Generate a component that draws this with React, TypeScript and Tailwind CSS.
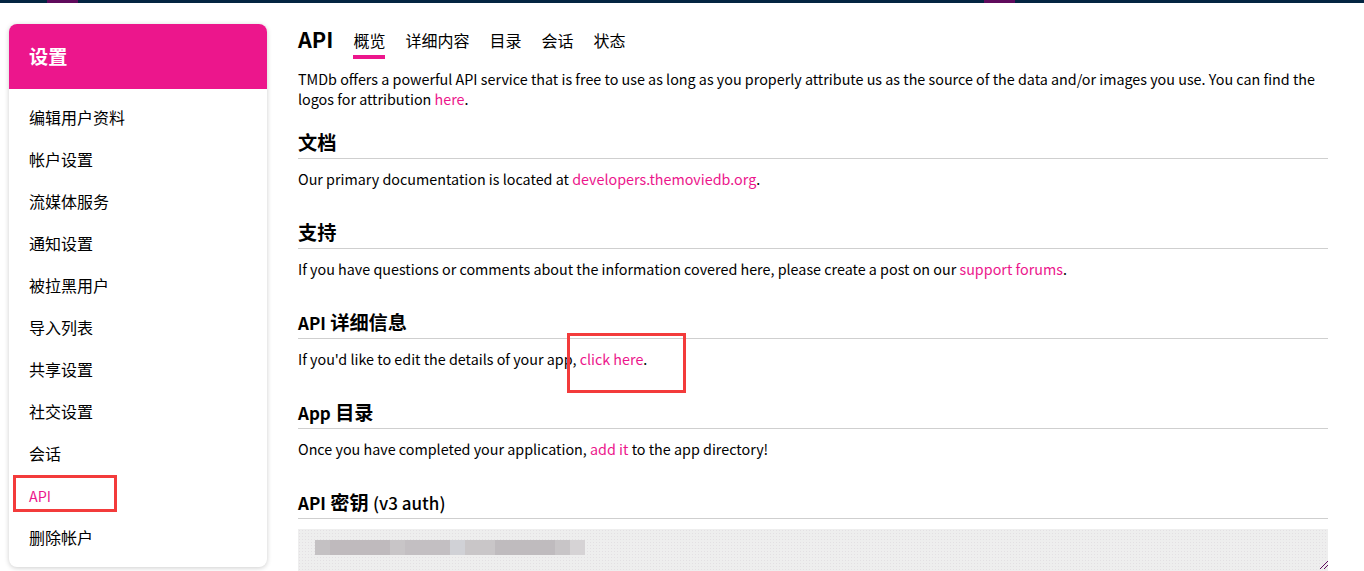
const PINK = 'text-[#ec168c]';

const menu = ['编辑用户资料', '帐户设置', '流媒体服务', '通知设置', '被拉黑用户', '导入列表', '共享设置', '社交设置', '会话', 'API', '删除帐户'];
const tabs = ['概览', '详细内容', '目录', '会话', '状态'];
const keyBlocks = [
  { w: 'w-[15px]', bg: 'bg-[#c4c1c3]' },
  { w: 'w-[60px]', bg: 'bg-[#bfbabd]' },
  { w: 'w-[15px]', bg: 'bg-[#c8c5c7]' },
  { w: 'w-[45px]', bg: 'bg-[#c3bfc2]' },
  { w: 'w-[15px]', bg: 'bg-[#d0d1d6]' },
  { w: 'w-[30px]', bg: 'bg-[#c9c6c8]' },
  { w: 'w-[60px]', bg: 'bg-[#bfbbbe]' },
  { w: 'w-[15px]', bg: 'bg-[#c8c5c7]' },
  { w: 'w-[15px]', bg: 'bg-[#d6d3d5]' },
];

function Heading({ children }: { children: React.ReactNode }) {
  return (
    <h2 className="h-[33px] border-b border-[#cfcfcf] text-[19.2px] font-semibold leading-[32px]">
      {children}
    </h2>
  );
}

function Latin({ children }: { children: React.ReactNode }) {
  return <span className="text-[17px]">{children}</span>;
}

function Section({ title, mt, children }: { title: React.ReactNode; mt: string; children: React.ReactNode }) {
  return (
    <section className={mt}>
      <Heading>{title}</Heading>
      <p className="mt-[10px] text-[14.33px] leading-5">{children}</p>
    </section>
  );
}

export default function App() {
  return (
    <div className="relative h-[571px] overflow-hidden bg-white text-base text-black font-['Noto_Sans_CJK_SC','Noto_Sans',sans-serif]">
      {/* top bar */}
      <div className="flex h-[3px] bg-[#032541]">
        <div className="ml-[47px] w-[31px] bg-[#5f0a5c]" />
        <div className="ml-[906px] w-[31px] bg-[#5f0a5c]" />
      </div>

      <div className="flex items-start pl-[9px] pt-[21px]">
        {/* sidebar */}
        <aside className="w-[258px] shrink-0 overflow-hidden rounded-lg bg-white shadow-[0_1px_5px_rgba(0,0,0,0.2)]">
          <div className="flex h-[65px] items-center bg-[#ec168c] pl-5 text-[19.2px] font-semibold text-white">设置</div>
          <ul className="pb-[9px] pt-[7px]">
            {menu.map((m) => (
              <li key={m} className={`flex h-[42px] items-center pl-5 ${m === 'API' ? `pt-[2px] text-[14.33px] ${PINK}` : ''}`}>
                {m}
              </li>
            ))}
          </ul>
        </aside>

        {/* main */}
        <main className="ml-[31px] w-[1030px] shrink-0">
          <div className="flex h-[35px] items-start">
            <h1 className="mr-5 text-[21.6px] font-semibold leading-[30px]">API</h1>
            <nav className="flex gap-5">
              {tabs.map((t, i) => (
                <a key={t} className={`mt-1 block h-[31px] leading-6 ${i === 0 ? 'border-b-4 border-[#ec168c]' : ''}`}>
                  {t}
                </a>
              ))}
            </nav>
          </div>

          <p className="mt-[10px] text-[14.33px] leading-5">
            TMDb offers a powerful API service that is free to use as long as you properly attribute us as the source of the data and/or images you use. You can find the logos for attribution <a className={PINK}>here</a>.
          </p>

          <Section title="文档" mt="mt-[17px]">
            Our primary documentation is located at <a className={PINK}>developers.themoviedb.org</a>.
          </Section>
          <Section title="支持" mt="mt-[27px]">
            If you have questions or comments about the information covered here, please create a post on our <a className={PINK}>support forums</a>.
          </Section>
          <Section title={<><Latin>API</Latin> 详细信息</>} mt="mt-[27px]">
            If you'd like to edit the details of your app, <a className={PINK}>click here</a>.
          </Section>
          <Section title={<><Latin>App</Latin> 目录</>} mt="mt-[27px]">
            Once you have completed your application, <a className={PINK}>add it</a> to the app directory!
          </Section>

          <section className="mt-[27px]">
            <Heading>
              <Latin>API</Latin> 密钥 <Latin><span className="font-medium">(v3 auth)</span></Latin>
            </Heading>
            <div className="relative mt-[10px] h-[60px] bg-[#eeeeee] bg-[radial-gradient(#e3e0e3_0.6px,transparent_0.8px)] bg-[length:3px_3px] pl-[17px] pt-[11px]">
              <div className="flex h-[15px]">
                {keyBlocks.map((b, i) => (
                  <div key={i} className={`${b.w} ${b.bg}`} />
                ))}
              </div>
              <svg className="absolute bottom-[20px] right-0 h-[9px] w-[9px]" viewBox="0 0 9 9">
                <path d="M1 9 L9 1 M5 9 L9 5" stroke="#5f0a5c" strokeWidth="1" fill="none" />
              </svg>
            </div>
          </section>
        </main>
      </div>

      {/* red annotation boxes */}
      <div className="absolute left-[13px] top-[475px] h-[37px] w-[104px] border-[3px] border-[#f33b3b]" />
      <div className="absolute left-[567px] top-[333px] h-[60px] w-[119px] border-[3px] border-[#f33b3b]" />
    </div>
  );
}
